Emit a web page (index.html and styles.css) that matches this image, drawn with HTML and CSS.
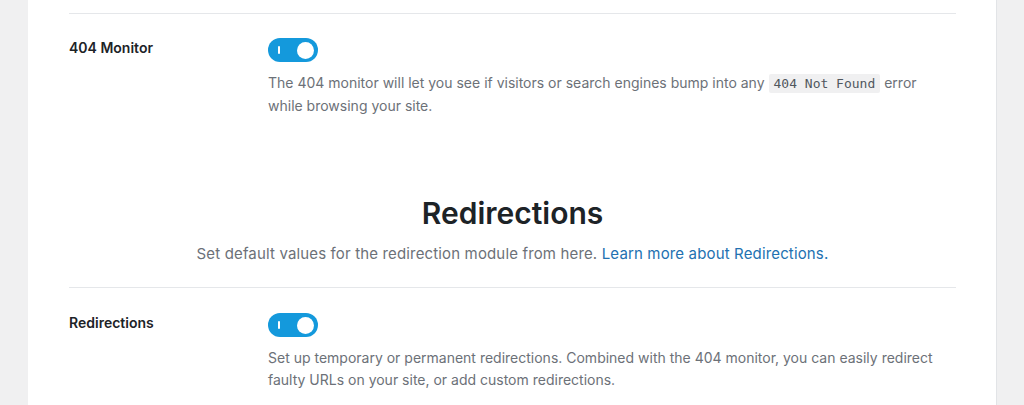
FILE: index.html
```html
<!DOCTYPE html>
<html lang="en">
<head>
<meta charset="utf-8">
<title>Settings</title>
<link rel="stylesheet" href="styles.css">
</head>
<body>
<div class="page">
  <main class="card">
    <div class="row row-first">
      <div class="label">404 Monitor</div>
      <div class="field">
        <span class="toggle"><span class="bar"></span><span class="knob"></span></span>
        <p class="desc">The 404 monitor will let you see if visitors or search engines bump into any <code>404 Not Found</code> error while browsing your site.</p>
      </div>
    </div>
    <section class="section-head">
      <h2>Redirections</h2>
      <p>Set default values for the redirection module from here. <a href="#">Learn more about Redirections.</a></p>
    </section>
    <div class="row row-second">
      <div class="label">Redirections</div>
      <div class="field">
        <span class="toggle"><span class="bar"></span><span class="knob"></span></span>
        <p class="desc">Set up temporary or permanent redirections. Combined with the 404 monitor, you can easily redirect faulty URLs on your site, or add custom redirections.</p>
      </div>
    </div>
  </main>
</div>
</body>
</html>
```
FILE: styles.css
```css
html, body {
  margin: 0;
  padding: 0;
}
body {
  background: #f0f0f1;
  font-family: Inter, "Noto Sans", sans-serif;
  color: #1d2327;
  height: 405px;
  overflow: hidden;
}
.page {
  padding: 0 27px 0 28px;
}
.card {
  background: #fff;
  border-right: 1px solid #e2e4e7;
  padding: 13px 40px 0 41px;
  height: 405px;
  box-sizing: border-box;
}
.row {
  display: flex;
  border-top: 1px solid #e5e7ea;
  padding-top: 24px;
}
.row-second {
  padding-top: 25px;
}
.label {
  width: 199px;
  flex: none;
  font-size: 14px;
  font-weight: 600;
  line-height: 18px;
  padding-top: 1px;
}
.field {
  flex: 1;
  max-width: 672px;
}
.toggle {
  display: flex;
  align-items: center;
  justify-content: space-between;
  width: 50px;
  height: 24px;
  box-sizing: border-box;
  border-radius: 12px;
  background: #1499dc;
  padding: 0 4px 0 10px;
}
.toggle .bar {
  width: 2px;
  height: 8px;
  background: #fff;
  border-radius: 1px;
}
.toggle .knob {
  width: 17px;
  height: 17px;
  border-radius: 50%;
  background: #fff;
}
.desc {
  margin: 10px 0 0;
  font-size: 14px;
  line-height: 22px;
  color: #6c7178;
}
code {
  font-family: "DejaVu Sans Mono", monospace;
  font-size: 13px;
  background: #f0f0f1;
  color: #50575e;
  padding: 2px 5px;
  border-radius: 2px;
}
.section-head {
  text-align: center;
  padding: 76px 0 22px;
}
.section-head h2 {
  margin: 0;
  font-size: 30px;
  font-weight: 600;
  line-height: 40px;
  color: #1d2327;
}
.section-head p {
  margin: 10px 0 0;
  font-size: 15px;
  letter-spacing: 0.15px;
  line-height: 22px;
  color: #6c7178;
}
.section-head a {
  color: #2271b1;
  text-decoration: none;
}
```
